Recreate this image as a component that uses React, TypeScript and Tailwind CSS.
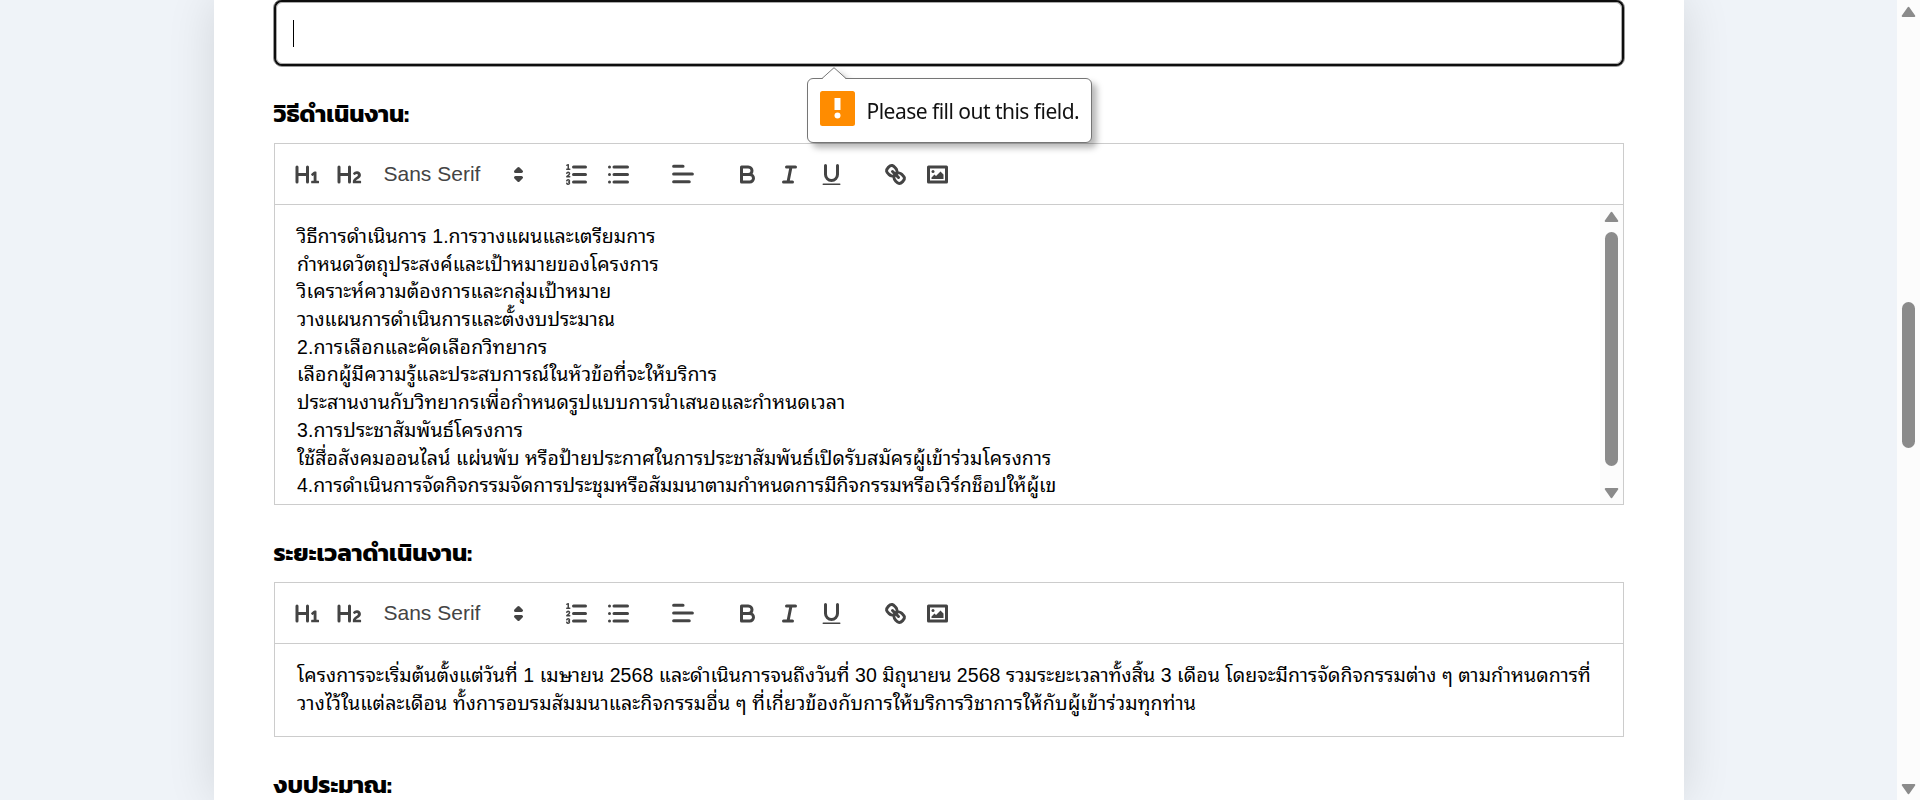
import React, { type ReactNode } from "react";

type Line = { text: string; tracking: string };

const methodLines: Line[] = [
  { text: "วิธีการดำเนินการ 1.การวางแผนและเตรียมการ", tracking: "tracking-[0.03px]" },
  { text: "กำหนดวัตถุประสงค์และเป้าหมายของโครงการ", tracking: "tracking-[0.12px]" },
  { text: "วิเคราะห์ความต้องการและกลุ่มเป้าหมาย", tracking: "tracking-[0.12px]" },
  { text: "วางแผนการดำเนินการและตั้งงบประมาณ", tracking: "tracking-[0.02px]" },
  { text: "2.การเลือกและคัดเลือกวิทยากร", tracking: "tracking-[0.14px]" },
  { text: "เลือกผู้มีความรู้และประสบการณ์ในหัวข้อที่จะให้บริการ", tracking: "tracking-[0.17px]" },
  { text: "ประสานงานกับวิทยากรเพื่อกำหนดรูปแบบการนำเสนอและกำหนดเวลา", tracking: "tracking-[0.14px]" },
  { text: "3.การประชาสัมพันธ์โครงการ", tracking: "tracking-[0.15px]" },
  {
    text: "ใช้สื่อสังคมออนไลน์ แผ่นพับ หรือป้ายประกาศในการประชาสัมพันธ์เปิดรับสมัครผู้เข้าร่วมโครงการ",
    tracking: "tracking-[0.1px]",
  },
  {
    text: "4.การดำเนินการจัดกิจกรรมจัดการประชุมหรือสัมมนาตามกำหนดการมีกิจกรรมหรือเวิร์กช็อปให้ผู้เข",
    tracking: "tracking-[-0.01px]",
  },
];

const periodLines: Line[] = [
  {
    text: "โครงการจะเริ่มต้นตั้งแต่วันที่ 1 เมษายน 2568 และดำเนินการจนถึงวันที่ 30 มิถุนายน 2568 รวมระยะเวลาทั้งสิ้น 3 เดือน โดยจะมีการจัดกิจกรรมต่าง ๆ ตามกำหนดการที่",
    tracking: "tracking-[0.05px]",
  },
  {
    text: "วางไว้ในแต่ละเดือน ทั้งการอบรมสัมมนาและกิจกรรมอื่น ๆ ที่เกี่ยวข้องกับการให้บริการวิชาการให้กับผู้เข้าร่วมทุกท่าน",
    tracking: "tracking-[0.13px]",
  },
];

function Tool({ children }: { children: ReactNode }) {
  return (
    <button className="flex h-9 w-[42px] items-center justify-center">
      <svg
        viewBox="0 0 18 18"
        className="size-[27px]"
        fill="none"
        stroke="#444"
        strokeWidth="2"
        strokeLinecap="round"
        strokeLinejoin="round"
      >
        {children}
      </svg>
    </button>
  );
}

function Toolbar() {
  return (
    <div className="flex h-[62px] items-center gap-[22.5px] border border-[#ccc] pl-3">
      <div className="flex">
        <Tool>
          <path
            fill="#444"
            stroke="none"
            d="M10,4V14a1,1,0,0,1-2,0V10H3v4a1,1,0,0,1-2,0V4A1,1,0,0,1,3,4V8H8V4a1,1,0,0,1,2,0Zm6.06787,9.209H14.98975V7.59863a.54085.54085,0,0,0-.605-.60547h-.62744a1.01119,1.01119,0,0,0-.748.29688L11.645,8.56641a.5435.5435,0,0,0-.022.8584l.28613.30762a.53861.53861,0,0,0,.84717.0332l.09912-.08789a1.2137,1.2137,0,0,0,.2417-.35254h.02246s-.01123.30859-.01123.60547V13.209H12.041a.54085.54085,0,0,0-.605.60547v.43945a.54085.54085,0,0,0,.605.60547h4.02686a.54085.54085,0,0,0,.605-.60547v-.43945A.54085.54085,0,0,0,16.06787,13.209Z"
          />
        </Tool>
        <Tool>
          <path
            fill="#444"
            stroke="none"
            d="M16.73975,13.81445v.43945a.54085.54085,0,0,1-.605.60547H11.855a.58392.58392,0,0,1-.64893-.60547V14.0127c0-2.90527,3.39941-3.42187,3.39941-4.55469a.77675.77675,0,0,0-.84717-.78125,1.17684,1.17684,0,0,0-.83594.38477c-.2749.26367-.561.374-.85791.13184l-.4292-.34082c-.30811-.24219-.38525-.51758-.1543-.81445a2.97155,2.97155,0,0,1,2.45361-1.17676,2.45393,2.45393,0,0,1,2.68408,2.40918c0,2.45312-3.1792,2.92676-3.27832,3.93848h2.79443A.54085.54085,0,0,1,16.73975,13.81445ZM9,3A.99974.99974,0,0,0,8,4V8H3V4A1,1,0,0,0,1,4V14a1,1,0,0,0,2,0V10H8v4a1,1,0,0,0,2,0V4A.99974.99974,0,0,0,9,3Z"
          />
        </Tool>
        <button className="flex h-9 w-[162px] items-center justify-between pr-px pl-[13px] font-['Liberation_Sans',Arial,sans-serif] text-[21px] leading-9 text-[#444]">
          <span>Sans Serif</span>
          <svg
            viewBox="0 0 18 18"
            className="size-[27px]"
            fill="none"
            stroke="#444"
            strokeWidth="2"
            strokeLinecap="round"
            strokeLinejoin="round"
          >
            <polygon points="7 11 9 13 11 11 7 11" />
            <polygon points="7 7 9 5 11 7 7 7" />
          </svg>
        </button>
      </div>
      <div className="flex">
        <Tool>
          <path d="M7 4h8M7 9h8M7 14h8" />
          <path strokeWidth="1" d="M2.5 5.5h2" />
          <path
            fill="#444"
            stroke="none"
            d="M3.5,6A0.5,0.5,0,0,1,3,5.5V3.085l-0.276.138A0.5,0.5,0,0,1,2.053,3c-0.124-.247-0.023-0.324.224-0.447l1-.5A0.5,0.5,0,0,1,4,2.5v3A0.5,0.5,0,0,1,3.5,6Z"
          />
          <path
            strokeWidth="1"
            d="M4.5,10.5h-2c0-.234,1.85-1.076,1.85-2.234A0.959,0.959,0,0,0,2.5,8.156"
          />
          <path
            strokeWidth="1"
            d="M2.5,14.846a0.959,0.959,0,0,0,1.85-.109A0.7,0.7,0,0,0,3.75,14a0.688,0.688,0,0,0,.6-0.736,0.959,0.959,0,0,0-1.85-.109"
          />
        </Tool>
        <Tool>
          <path d="M6 4h9M6 9h9M6 14h9M3 4h0M3 9h0M3 14h0" />
        </Tool>
      </div>
      <button className="flex h-9 w-[42px] items-center justify-center">
        <svg
          viewBox="0 0 18 18"
          className="size-7"
          fill="none"
          stroke="#444"
          strokeWidth="2"
          strokeLinecap="round"
        >
          <path d="M3 9h12M3 14h10M3 4h6" />
        </svg>
      </button>
      <div className="flex">
        <Tool>
          <path d="M5,4H9.5A2.5,2.5,0,0,1,12,6.5v0A2.5,2.5,0,0,1,9.5,9H5A0,0,0,0,1,5,9V4A0,0,0,0,1,5,4Z" />
          <path d="M5,9h5.5A2.5,2.5,0,0,1,13,11.5v0A2.5,2.5,0,0,1,10.5,14H5a0,0,0,0,1,0,0V9A0,0,0,0,1,5,9Z" />
        </Tool>
        <Tool>
          <path d="M7 4h6M5 14h6M8 14L10 4" />
        </Tool>
        <Tool>
          <path d="M5,3V9a4.012,4.012,0,0,0,4,4H9a4.012,4.012,0,0,0,4-4V3" />
          <rect fill="#444" stroke="none" x="3" y="15" width="12" height="1" rx="0.5" />
        </Tool>
      </div>
      <div className="flex">
        <Tool>
          <path d="M7 7L11 11" />
          <path d="M8.9,4.577a3.476,3.476,0,0,1,.36,4.679A3.476,3.476,0,0,1,4.577,8.9C3.185,7.5,2.035,6.4,4.217,4.217S7.5,3.185,8.9,4.577Z" />
          <path d="M13.423,9.1a3.476,3.476,0,0,0-4.679-.36,3.476,3.476,0,0,0,.36,4.679c1.392,1.392,2.5,2.542,4.679.36S14.815,10.5,13.423,9.1Z" />
        </Tool>
        <Tool>
          <rect x="3" y="4" width="12" height="10" />
          <circle cx="6" cy="7" r="1" fill="#444" stroke="none" />
          <polyline
            points="5 12 5 11 7 9 8 10 11 7 13 9 13 12 5 12"
            fill="#444"
            fillRule="evenodd"
            stroke="none"
          />
        </Tool>
      </div>
    </div>
  );
}

function Heading({ children }: { children: ReactNode }) {
  return (
    <h2 className="h-[77px] pt-[30px] font-['Kanit','Noto_Sans',sans-serif] text-[24px] leading-9 font-bold text-black">
      {children}
    </h2>
  );
}

function Lines({ lines }: { lines: Line[] }) {
  return (
    <div className="flex-1 px-[22.5px] pt-[18px] font-['Liberation_Sans','Noto_Sans_Thai_Looped','Sarabun',sans-serif] text-[19.5px] leading-[27.69px] whitespace-nowrap text-black">
      {lines.map((line) => (
        <p key={line.text} className={line.tracking}>
          {line.text}
        </p>
      ))}
    </div>
  );
}

function Arrow({ down = false }: { down?: boolean }) {
  return (
    <svg
      viewBox="0 0 15 12"
      className={down ? "h-3 w-[15px] rotate-180" : "h-3 w-[15px]"}
      fill="#8b8b8b"
      stroke="#8b8b8b"
      strokeWidth="2"
      strokeLinejoin="round"
    >
      <path d="M7.5 1.7L13.3 10H1.7Z" />
    </svg>
  );
}

function Validation() {
  return (
    <div className="absolute top-[67px] left-[533px] z-10 w-[285px] drop-shadow-[5px_5px_3px_rgba(0,0,0,0.28)]">
      <div className="mt-[11px] flex h-[65px] items-start rounded-md border border-[#767676] bg-white pt-3 pl-3">
        <svg viewBox="0 0 35 35" className="size-[35px] shrink-0">
          <rect width="35" height="35" rx="2.5" fill="#ff8c00" />
          <path d="M14.5 7h6v12h-6z" fill="#fff" />
          <circle cx="17.5" cy="24.5" r="3" fill="#fff" />
        </svg>
        <span className="ml-3 font-['Noto_Sans',sans-serif] text-[21px] leading-10 tracking-[-0.52px] whitespace-nowrap text-[#111]">
          Please fill out this field.
        </span>
      </div>
      <svg viewBox="0 0 26 13" className="absolute top-0 left-[14px] h-[13px] w-[26px]">
        <path d="M1 12L13 .7L25 12V13H1Z" fill="#fff" />
        <path d="M1 11.5L13 .7L25 11.5" fill="none" stroke="#767676" />
      </svg>
    </div>
  );
}

export default function App() {
  return (
    <div className="flex h-[800px] w-full overflow-hidden bg-[#eff3f8]">
      <div className="flex flex-1 justify-center overflow-hidden">
        <main className="w-[1470px] bg-white px-[60px] shadow-[0_0_45px_rgba(0,0,0,0.12)]">
          <div className="relative -mx-px flex h-[67px] items-end">
            <div className="flex h-[68px] flex-1 shrink-0 rounded-[9px] border border-[#999] bg-[#999]">
              <div className="flex flex-1 rounded-lg bg-[#999] ring-2 ring-[#0d0d0d] ring-inset">
                <div className="m-0.5 flex flex-1 rounded-md border border-[#aaa] bg-white pt-[17px] pl-4">
                  <span className="h-[27px] w-px bg-black" />
                </div>
              </div>
            </div>
            <div className="absolute top-0 left-px">
              <Validation />
            </div>
          </div>

          <section className="-mt-px">
            <Heading>วิธีดำเนินงาน:</Heading>
            <Toolbar />
            <div className="flex h-[300px] overflow-hidden border border-t-0 border-[#ccc]">
              <Lines lines={methodLines} />
              <div className="flex w-[23px] flex-col items-center bg-[#fcfcfc] pt-1.5 pb-[5px]">
                <Arrow />
                <div className="mt-[9px] h-[234px] w-[13px] rounded-full bg-[#8b8b8b]" />
                <div className="mt-auto flex">
                  <Arrow down />
                </div>
              </div>
            </div>
          </section>

          <section>
            <Heading>ระยะเวลาดำเนินงาน:</Heading>
            <Toolbar />
            <div className="flex h-[93px] border border-t-0 border-[#ccc]">
              <Lines lines={periodLines} />
            </div>
          </section>

          <section>
            <Heading>งบประมาณ:</Heading>
          </section>
        </main>
      </div>
      <div className="flex w-[23px] flex-col items-center bg-[#fcfcfc] pt-1.5 pb-[5px]">
        <Arrow />
        <div className="mt-[284px] h-[146px] w-[13px] rounded-full bg-[#8b8b8b]" />
        <div className="mt-auto flex">
          <Arrow down />
        </div>
      </div>
    </div>
  );
}
